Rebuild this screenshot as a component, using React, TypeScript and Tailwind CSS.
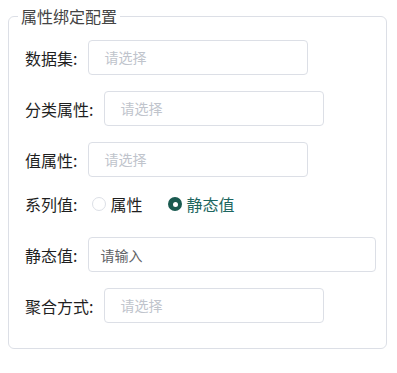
import { useState } from 'react'

const font = { fontFamily: '"Noto Sans CJK SC", "Noto Sans", sans-serif' }

function Select({ className }: { className: string }) {
  return (
    <div
      className={`shrink-0 h-[35px] w-[220px] rounded border border-[#dcdfe6] bg-white pl-[15px] flex items-center text-[14px] text-[#c0c4cc] ${className}`}
    >
      请选择
    </div>
  )
}

function Label({ text }: { text: string }) {
  return <span className="shrink-0 whitespace-nowrap text-[16px] text-[#1f1f1f]">{text}</span>
}

function Radio({ checked, label, onClick }: { checked: boolean; label: string; onClick: () => void }) {
  return (
    <label className="flex items-center cursor-pointer" onClick={onClick}>
      {checked ? (
        <span className="w-[14px] h-[14px] rounded-full bg-[#1a5a50] flex items-center justify-center">
          <span className="w-[5px] h-[5px] rounded-full bg-white" />
        </span>
      ) : (
        <span className="w-[14px] h-[14px] rounded-full border border-[#dcdfe6] bg-white" />
      )}
      <span className={`ml-[4px] text-[16px] ${checked ? 'text-[#1d6660]' : 'text-[#1f1f1f]'}`}>{label}</span>
    </label>
  )
}

export default function App() {
  const [series, setSeries] = useState<'attr' | 'static'>('static')

  return (
    <div className="w-[397px] h-[373px] bg-white pl-[8px] pt-[6px]" style={font}>
      <fieldset className="w-[379px] rounded-md border border-[#dcdfe6] pl-4 pr-[10px] pt-[14px] pb-[25px]">
        <legend className="-ml-[7px] px-[3px] text-[16px] leading-[20px] text-[#444]">属性绑定配置</legend>

        {/* 数据集 */}
        <div className="flex items-center mb-4">
          <Label text="数据集:" />
          <Select className="ml-[11px]" />
        </div>

        {/* 分类属性 */}
        <div className="flex items-center mb-4">
          <Label text="分类属性:" />
          <Select className="ml-[11px]" />
        </div>

        {/* 值属性 */}
        <div className="flex items-center mb-4">
          <Label text="值属性:" />
          <Select className="ml-[11px]" />
        </div>

        {/* 系列值 */}
        <div className="flex items-center h-[22px] mb-[22px]">
          <Label text="系列值:" />
          <div className="flex items-center ml-[15px] gap-[26px]">
            <Radio checked={series === 'attr'} label="属性" onClick={() => setSeries('attr')} />
            <Radio checked={series === 'static'} label="静态值" onClick={() => setSeries('static')} />
          </div>
        </div>

        {/* 静态值 */}
        <div className="flex items-center mb-4">
          <Label text="静态值:" />
          <input
            placeholder="请输入"
            className="shrink-0 ml-[11px] h-[35px] w-[288px] rounded border border-[#dcdfe6] px-[11px] text-[14px] outline-none placeholder:text-[#606266]"
          />
        </div>

        {/* 聚合方式 */}
        <div className="flex items-center">
          <Label text="聚合方式:" />
          <Select className="ml-[11px]" />
        </div>
      </fieldset>
    </div>
  )
}
